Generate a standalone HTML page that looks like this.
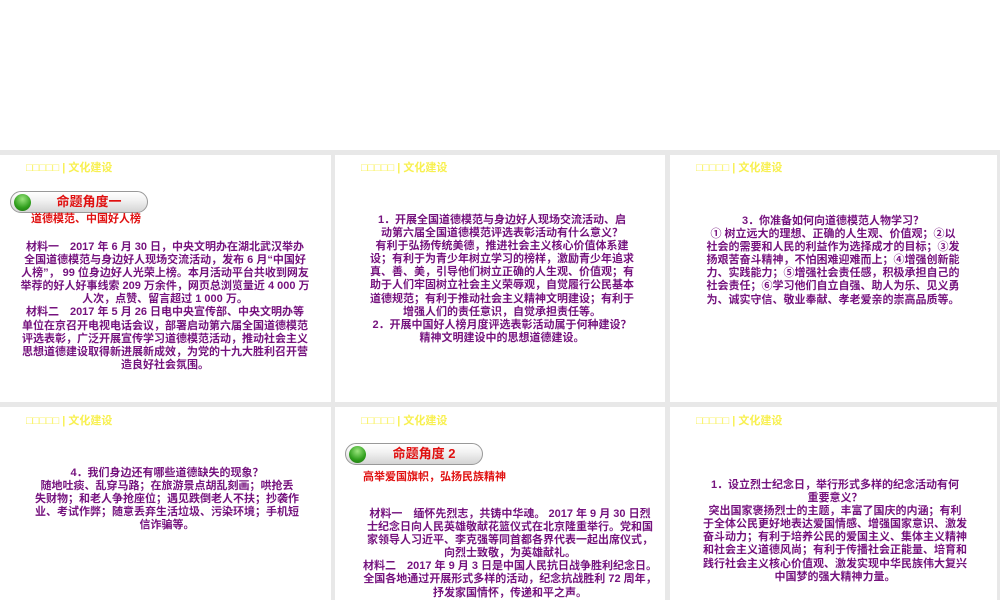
<!DOCTYPE html>
<html><head><meta charset="utf-8"><style>
*{margin:0;padding:0;box-sizing:border-box}
body{width:1000px;height:600px;position:relative;background:#fff;overflow:hidden;font-family:"Liberation Sans","Noto Sans CJK SC",sans-serif}
.g{position:absolute;background:#e8e8e8}
.hd{position:absolute;font-size:11px;color:#f8f050;white-space:nowrap;line-height:12px;font-weight:bold}
.t{position:absolute;font-size:11px;line-height:13.1px;font-weight:bold;color:#75127e;text-align:center;white-space:nowrap;transform:translateX(-50%)}
.pill{position:absolute;width:138px;height:22px;border-radius:11px;border:1px solid #999;background:linear-gradient(#fff,#f2f2f2 40%,#d4d4d4);}
.pill .dot{position:absolute;left:3px;top:2px;width:17px;height:17px;border-radius:50%;background:radial-gradient(circle at 50% 30%,#9be57e,#2f9e1c 60%,#1d6e10)}
.pill span{position:absolute;left:20px;right:0;top:0;line-height:20px;text-align:center;color:#e01010;font-weight:bold;font-size:13px}
.sub{position:absolute;font-size:11px;font-weight:bold;color:#e01010;white-space:nowrap;line-height:13px}
</style></head><body>
<div class="g" style="left:0;top:150px;width:1000px;height:5px"></div>
<div class="g" style="left:0;top:402px;width:1000px;height:5px"></div>
<div class="g" style="left:331px;top:150px;width:4px;height:450px"></div>
<div class="g" style="left:665px;top:150px;width:5px;height:450px"></div>
<div class="g" style="left:997px;top:150px;width:3px;height:450px"></div>

<div class="hd" style="left:26px;top:162px">□□□□□ | 文化建设</div>
<div class="hd" style="left:361px;top:162px">□□□□□ | 文化建设</div>
<div class="hd" style="left:696px;top:162px">□□□□□ | 文化建设</div>
<div class="hd" style="left:26px;top:415px">□□□□□ | 文化建设</div>
<div class="hd" style="left:361px;top:415px">□□□□□ | 文化建设</div>
<div class="hd" style="left:696px;top:415px">□□□□□ | 文化建设</div>

<div class="pill" style="left:10px;top:191px"><div class="dot"></div><span>命题角度一</span></div>
<div class="sub" style="left:31px;top:213px">道德模范、中国好人榜</div>
<div class="pill" style="left:345px;top:443px"><div class="dot"></div><span>命题角度 2</span></div>
<div class="sub" style="left:363px;top:471px">高举爱国旗帜，弘扬民族精神</div>

<div class="t" style="left:165px;top:241px">材料一　2017 年 6 月 30 日，中央文明办在湖北武汉举办<br>全国道德模范与身边好人现场交流活动，发布 6 月“中国好<br>人榜”， 99 位身边好人光荣上榜。本月活动平台共收到网友<br>举荐的好人好事线索 209 万余件，网页总浏览量近 4 000 万<br>人次，点赞、留言超过 1 000 万。<br>材料二　2017 年 5 月 26 日电中央宣传部、中央文明办等<br>单位在京召开电视电话会议，部署启动第六届全国道德模范<br>评选表彰，广泛开展宣传学习道德模范活动，推动社会主义<br>思想道德建设取得新进展新成效，为党的十九大胜利召开营<br>造良好社会氛围。</div>

<div class="t" style="left:502px;top:214px">1．开展全国道德模范与身边好人现场交流活动、启<br>动第六届全国道德模范评选表彰活动有什么意义？<br>有利于弘扬传统美德，推进社会主义核心价值体系建<br>设；有利于为青少年树立学习的榜样，激励青少年追求<br>真、善、美，引导他们树立正确的人生观、价值观；有<br>助于人们牢固树立社会主义荣辱观，自觉履行公民基本<br>道德规范；有利于推动社会主义精神文明建设；有利于<br>增强人们的责任意识，自觉承担责任等。<br>2．开展中国好人榜月度评选表彰活动属于何种建设？<br>精神文明建设中的思想道德建设。</div>

<div class="t" style="left:833px;top:215px">3．你准备如何向道德模范人物学习？<br>① 树立远大的理想、正确的人生观、价值观；②以<br>社会的需要和人民的利益作为选择成才的目标；③发<br>扬艰苦奋斗精神，不怕困难迎难而上；④增强创新能<br>力、实践能力；⑤增强社会责任感，积极承担自己的<br>社会责任；⑥学习他们自立自强、助人为乐、见义勇<br>为、诚实守信、敬业奉献、孝老爱亲的崇高品质等。</div>

<div class="t" style="left:167px;top:467px">4．我们身边还有哪些道德缺失的现象？<br>随地吐痰、乱穿马路；在旅游景点胡乱刻画；哄抢丢<br>失财物；和老人争抢座位；遇见跌倒老人不扶；抄袭作<br>业、考试作弊；随意丢弃生活垃圾、污染环境；手机短<br>信诈骗等。</div>

<div class="t" style="left:510px;top:508px">材料一　缅怀先烈志，共铸中华魂。 2017 年 9 月 30 日烈<br>士纪念日向人民英雄敬献花篮仪式在北京隆重举行。党和国<br>家领导人习近平、李克强等同首都各界代表一起出席仪式，<br>向烈士致敬，为英雄献礼。<br>材料二　2017 年 9 月 3 日是中国人民抗日战争胜利纪念日。<br>全国各地通过开展形式多样的活动，纪念抗战胜利 72 周年，<br>抒发家国情怀，传递和平之声。</div>

<div class="t" style="left:835px;top:479px">1．设立烈士纪念日，举行形式多样的纪念活动有何<br>重要意义？<br>突出国家褒扬烈士的主题，丰富了国庆的内涵；有利<br>于全体公民更好地表达爱国情感、增强国家意识、激发<br>奋斗动力；有利于培养公民的爱国主义、集体主义精神<br>和社会主义道德风尚；有利于传播社会正能量、培育和<br>践行社会主义核心价值观、激发实现中华民族伟大复兴<br>中国梦的强大精神力量。</div>
</body></html>
